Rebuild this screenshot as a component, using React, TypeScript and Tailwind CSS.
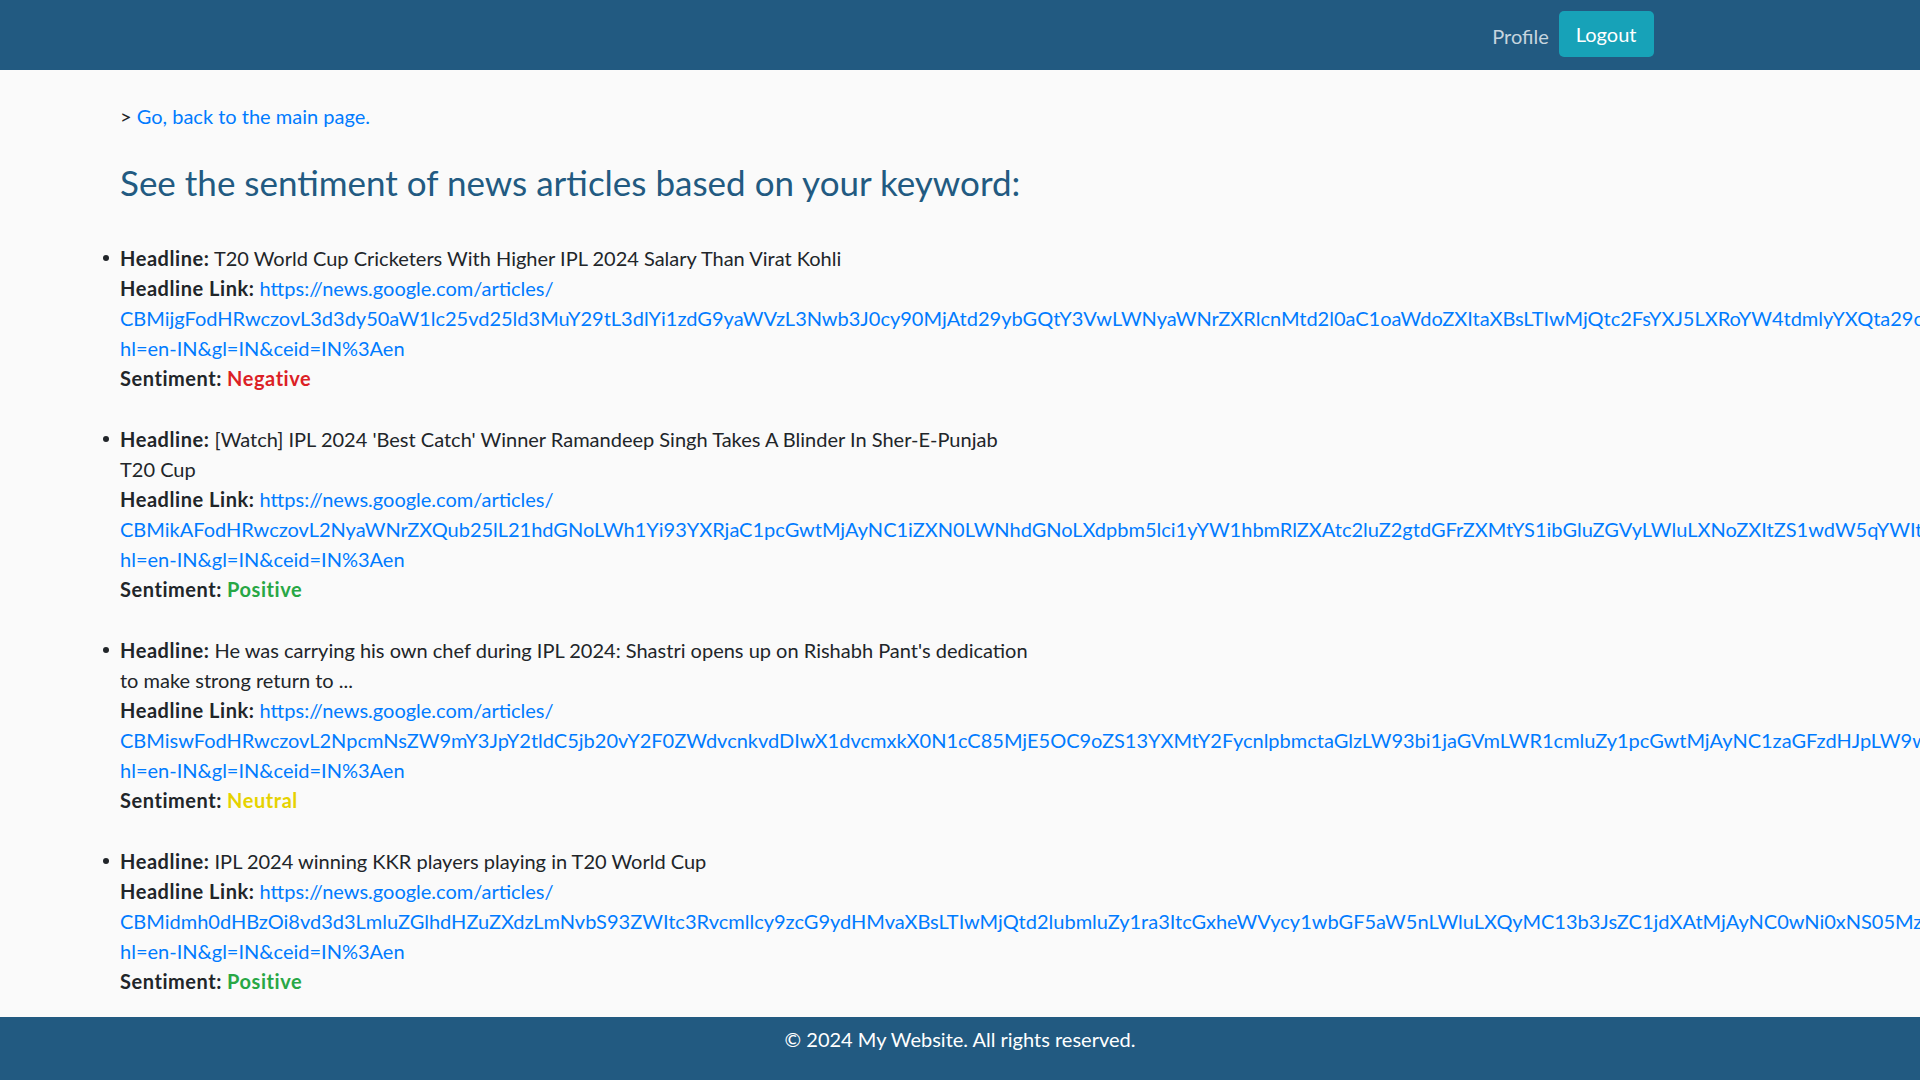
interface Article {
  headline: string[];
  token: string;
  sentiment: 'Positive' | 'Negative' | 'Neutral';
}

const articles: Article[] = [
  {
    headline: ['T20 World Cup Cricketers With Higher IPL 2024 Salary Than Virat Kohli'],
    token:
      'CBMijgFodHRwczovL3d3dy50aW1lc25vd25ld3MuY29tL3dlYi1zdG9yaWVzL3Nwb3J0cy90MjAtd29ybGQtY3VwLWNyaWNrZXRlcnMtd2l0aC1oaWdoZXItaXBsLTIwMjQtc2FsYXJ5LXRoYW4tdmlyYXQta29obGkvcGhvdG9zdG9yeS8xMTEwMzc5NDLSAQA',
    sentiment: 'Negative',
  },
  {
    headline: ["[Watch] IPL 2024 'Best Catch' Winner Ramandeep Singh Takes A Blinder In Sher-E-Punjab", 'T20 Cup'],
    token:
      'CBMikAFodHRwczovL2NyaWNrZXQub25lL21hdGNoLWh1Yi93YXRjaC1pcGwtMjAyNC1iZXN0LWNhdGNoLXdpbm5lci1yYW1hbmRlZXAtc2luZ2gtdGFrZXMtYS1ibGluZGVyLWluLXNoZXItZS1wdW5qYWItdDIwLWN1cC02NjZkNWQ4ZtIBAA',
    sentiment: 'Positive',
  },
  {
    headline: [
      "He was carrying his own chef during IPL 2024: Shastri opens up on Rishabh Pant's dedication",
      'to make strong return to ...',
    ],
    token:
      'CBMiswFodHRwczovL2NpcmNsZW9mY3JpY2tldC5jb20vY2F0ZWdvcnkvdDIwX1dvcmxkX0N1cC85MjE5OC9oZS13YXMtY2FycnlpbmctaGlzLW93bi1jaGVmLWR1cmluZy1pcGwtMjAyNC1zaGFzdHJpLW9wZW5zLXVwLW9uLXJpc2hhYmgtcGFudHMtZGVkaWNhdGlvbi10by1tYWtl0gEA',
    sentiment: 'Neutral',
  },
  {
    headline: ['IPL 2024 winning KKR players playing in T20 World Cup'],
    token:
      'CBMidmh0dHBzOi8vd3d3LmluZGlhdHZuZXdzLmNvbS93ZWItc3Rvcmllcy9zcG9ydHMvaXBsLTIwMjQtd2lubmluZy1ra3ItcGxheWVycy1wbGF5aW5nLWluLXQyMC13b3JsZC1jdXAtMjAyNC0wNi0xNS05MzcwNjbSAXpodHRwczovL3d3dy5pbmRpYXR2bmV3cy5jb20',
    sentiment: 'Positive',
  },
];

const sentimentColor = {
  Positive: 'text-[#28a745]',
  Negative: 'text-[#dc1f26]',
  Neutral: 'text-[#e6d200]',
};

const Label = ({ children }: { children: string }) => (
  <strong className="font-bold tracking-[0.55px]">{children}</strong>
);

const ArticleItem = ({ item }: { item: Article }) => (
  <li className="relative">
    {/* bullet */}
    <span className="absolute left-[-17px] top-[12px] h-[6px] w-[6px] rounded-full bg-[#212529]" />
    <div>
      <Label>Headline:</Label> {item.headline[0]}
      {item.headline[1] && (
        <>
          <br />
          {item.headline[1]}
        </>
      )}
    </div>
    <div>
      <Label>Headline Link:</Label>{' '}
      <a href="#" className="text-[#007bff]">
        https://news.google.com/articles/
        <br />
        {item.token}?
        <br />
        hl=en-IN&amp;gl=IN&amp;ceid=IN%3Aen
      </a>
    </div>
    <div>
      <Label>Sentiment:</Label>{' '}
      <span className={`font-bold tracking-[0.55px] ${sentimentColor[item.sentiment]}`}>{item.sentiment}</span>
    </div>
  </li>
);

export default function App() {
  return (
    <div className="min-h-screen w-full overflow-x-hidden bg-[#fafafa] font-['Lato',sans-serif] text-[20px] leading-[30px] text-[#212529]">
      {/* Navbar */}
      <nav className="h-[70px] bg-[#225a81]">
        <div className="mx-auto flex h-full w-[1425px] items-start justify-end px-[19px] pt-[10px]">
          <a href="#" className="mt-[11px] px-[10px] leading-[30px] text-white/75">
            Profile
          </a>
          <button className="mt-[1px] h-[46px] rounded-[5px] bg-[#17a2b8] px-[17px] text-[20px] leading-[30px] text-white">
            Logout
          </button>
        </div>
      </nav>

      {/* Content */}
      <main className="whitespace-nowrap pb-[21px] pl-[120px] pt-[31px]">
        <p>
          &gt;{' '}
          <a href="#" className="text-[#007bff]">
            Go, back to the main page.
          </a>
        </p>
        <h3 className="mt-[30px] text-[35px] font-normal leading-[42px] text-[#225a81]">
          See the sentiment of news articles based on your keyword:
        </h3>
        <ul className="mt-[40px] flex list-none flex-col gap-[31px]">
          {articles.map((a, i) => (
            <ArticleItem key={i} item={a} />
          ))}
        </ul>
      </main>

      {/* Footer */}
      <footer className="bg-[#225a81] pb-[28px] pt-[7px] text-center text-white">
        © 2024 My Website. All rights reserved.
      </footer>
    </div>
  );
}
